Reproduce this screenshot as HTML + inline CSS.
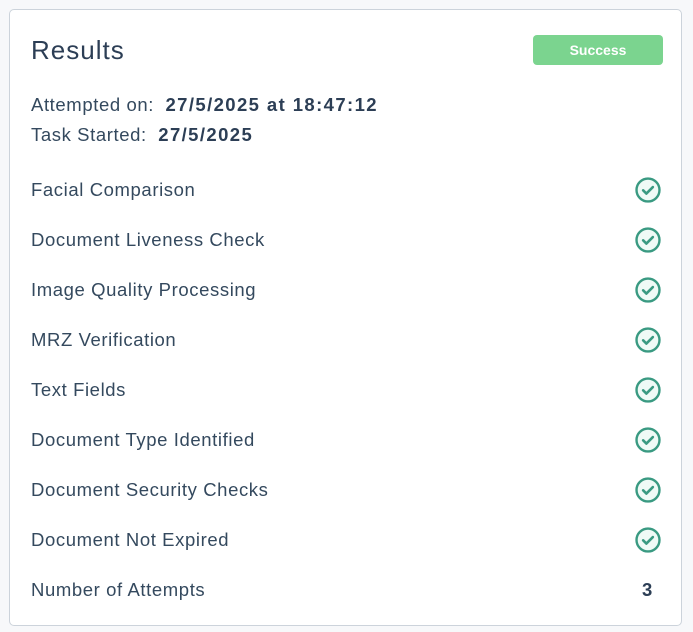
<!DOCTYPE html>
<html><head><style>
body{margin:0;background:#f7f8fa;font-family:"Liberation Sans",sans-serif;color:#34495e;}
.card{position:absolute;left:9px;top:9px;width:673px;height:617px;background:#fff;border:1px solid #ccd3db;border-radius:5px;box-sizing:border-box;}
.t{position:absolute;left:21px;font-size:18.5px;letter-spacing:0.6px;white-space:nowrap;}
b{color:#2c3e55;letter-spacing:1.4px;}
svg{position:absolute;left:625px;width:26px;height:26px;}
</style></head><body>
<div class="card">
<div class="t" style="top:25px;font-size:26px;letter-spacing:1px;color:#2c3e55">Results</div>
<div style="position:absolute;left:523px;top:25px;width:130px;height:30px;background:#7bd48f;border-radius:4px;color:#fff;font-weight:bold;font-size:14px;text-align:center;line-height:30px">Success</div>
<div class="t" style="top:84px">Attempted on:&nbsp; <b>27/5/2025 at 18:47:12</b></div>
<div class="t" style="top:114px">Task Started:&nbsp; <b>27/5/2025</b></div>
<div class="t" style="top:169px">Facial Comparison</div>
<div class="t" style="top:219px">Document Liveness Check</div>
<div class="t" style="top:269px">Image Quality Processing</div>
<div class="t" style="top:319px">MRZ Verification</div>
<div class="t" style="top:369px">Text Fields</div>
<div class="t" style="top:419px">Document Type Identified</div>
<div class="t" style="top:469px">Document Security Checks</div>
<div class="t" style="top:519px">Document Not Expired</div>
<div class="t" style="top:569px">Number of Attempts</div>
<div class="t" style="top:569px;left:632px;font-weight:bold;color:#2c3e55">3</div>
<svg style="top:167px" viewBox="0 0 24 24"><circle cx="12" cy="12" r="10.6" fill="#effaf6" stroke="#3a9a82" stroke-width="2.2"/><path d="M7.5 12.3l3 3 6-6" fill="none" stroke="#3a9a82" stroke-width="2.4" stroke-linecap="round" stroke-linejoin="round"/></svg>
<svg style="top:217px" viewBox="0 0 24 24"><circle cx="12" cy="12" r="10.6" fill="#effaf6" stroke="#3a9a82" stroke-width="2.2"/><path d="M7.5 12.3l3 3 6-6" fill="none" stroke="#3a9a82" stroke-width="2.4" stroke-linecap="round" stroke-linejoin="round"/></svg>
<svg style="top:267px" viewBox="0 0 24 24"><circle cx="12" cy="12" r="10.6" fill="#effaf6" stroke="#3a9a82" stroke-width="2.2"/><path d="M7.5 12.3l3 3 6-6" fill="none" stroke="#3a9a82" stroke-width="2.4" stroke-linecap="round" stroke-linejoin="round"/></svg>
<svg style="top:317px" viewBox="0 0 24 24"><circle cx="12" cy="12" r="10.6" fill="#effaf6" stroke="#3a9a82" stroke-width="2.2"/><path d="M7.5 12.3l3 3 6-6" fill="none" stroke="#3a9a82" stroke-width="2.4" stroke-linecap="round" stroke-linejoin="round"/></svg>
<svg style="top:367px" viewBox="0 0 24 24"><circle cx="12" cy="12" r="10.6" fill="#effaf6" stroke="#3a9a82" stroke-width="2.2"/><path d="M7.5 12.3l3 3 6-6" fill="none" stroke="#3a9a82" stroke-width="2.4" stroke-linecap="round" stroke-linejoin="round"/></svg>
<svg style="top:417px" viewBox="0 0 24 24"><circle cx="12" cy="12" r="10.6" fill="#effaf6" stroke="#3a9a82" stroke-width="2.2"/><path d="M7.5 12.3l3 3 6-6" fill="none" stroke="#3a9a82" stroke-width="2.4" stroke-linecap="round" stroke-linejoin="round"/></svg>
<svg style="top:467px" viewBox="0 0 24 24"><circle cx="12" cy="12" r="10.6" fill="#effaf6" stroke="#3a9a82" stroke-width="2.2"/><path d="M7.5 12.3l3 3 6-6" fill="none" stroke="#3a9a82" stroke-width="2.4" stroke-linecap="round" stroke-linejoin="round"/></svg>
<svg style="top:517px" viewBox="0 0 24 24"><circle cx="12" cy="12" r="10.6" fill="#effaf6" stroke="#3a9a82" stroke-width="2.2"/><path d="M7.5 12.3l3 3 6-6" fill="none" stroke="#3a9a82" stroke-width="2.4" stroke-linecap="round" stroke-linejoin="round"/></svg>
</div>
</body></html>
